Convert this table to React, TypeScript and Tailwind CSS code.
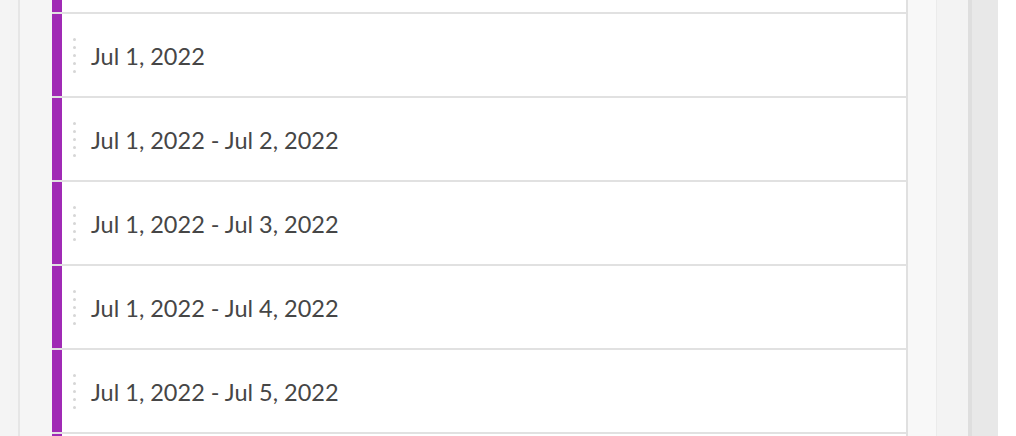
import React from 'react';

const rows = [
  '',
  'Jul 1, 2022',
  'Jul 1, 2022 - Jul 2, 2022',
  'Jul 1, 2022 - Jul 3, 2022',
  'Jul 1, 2022 - Jul 4, 2022',
  'Jul 1, 2022 - Jul 5, 2022',
  '',
];

const DragHandle = () => (
  <div className="flex flex-col gap-[5px]">
    {[0, 1, 2, 3, 4].map((i) => (
      <span key={i} className="block h-[3px] w-[3px] rounded-full bg-[#d6d6d6]" />
    ))}
  </div>
);

const App: React.FC = () => {
  return (
    <div className="flex h-[436px] w-[1016px] overflow-hidden bg-white font-['Lato',sans-serif]">
      <div className="w-[18px] bg-[#f4f4f4]" />
      <div className="w-[2px] bg-[#e6e6e6]" />
      <div className="w-[888px] bg-[#f5f5f5] pl-[32px]">
        {/* list is scrolled, first row only partly visible */}
        <div className="-mt-[70px] flex flex-col gap-[2px] border-r-2 border-[#e0e0e0] bg-[#e1e1e1]">
          {rows.map((label, i) => (
            <div key={i} className="flex h-[82px] bg-white">
              <div className="w-[10px] bg-[#a02ab5]" />
              {label && (
                <div className="flex items-center pl-[11px]">
                  <DragHandle />
                  <span className="ml-[15px] pt-[3px] text-[23.5px] text-[#464646]">{label}</span>
                </div>
              )}
            </div>
          ))}
        </div>
      </div>
      <div className="w-[28px] bg-[#f8f8f8]" />
      <div className="w-[1px] bg-[#ebebeb]" />
      <div className="w-[31px] bg-[#f3f3f3]" />
      <div className="w-[4px] bg-[#dedede]" />
      <div className="w-[26px] bg-[#e8e8e8]" />
      <div className="flex-1 bg-white" />
    </div>
  );
};

export default App;
